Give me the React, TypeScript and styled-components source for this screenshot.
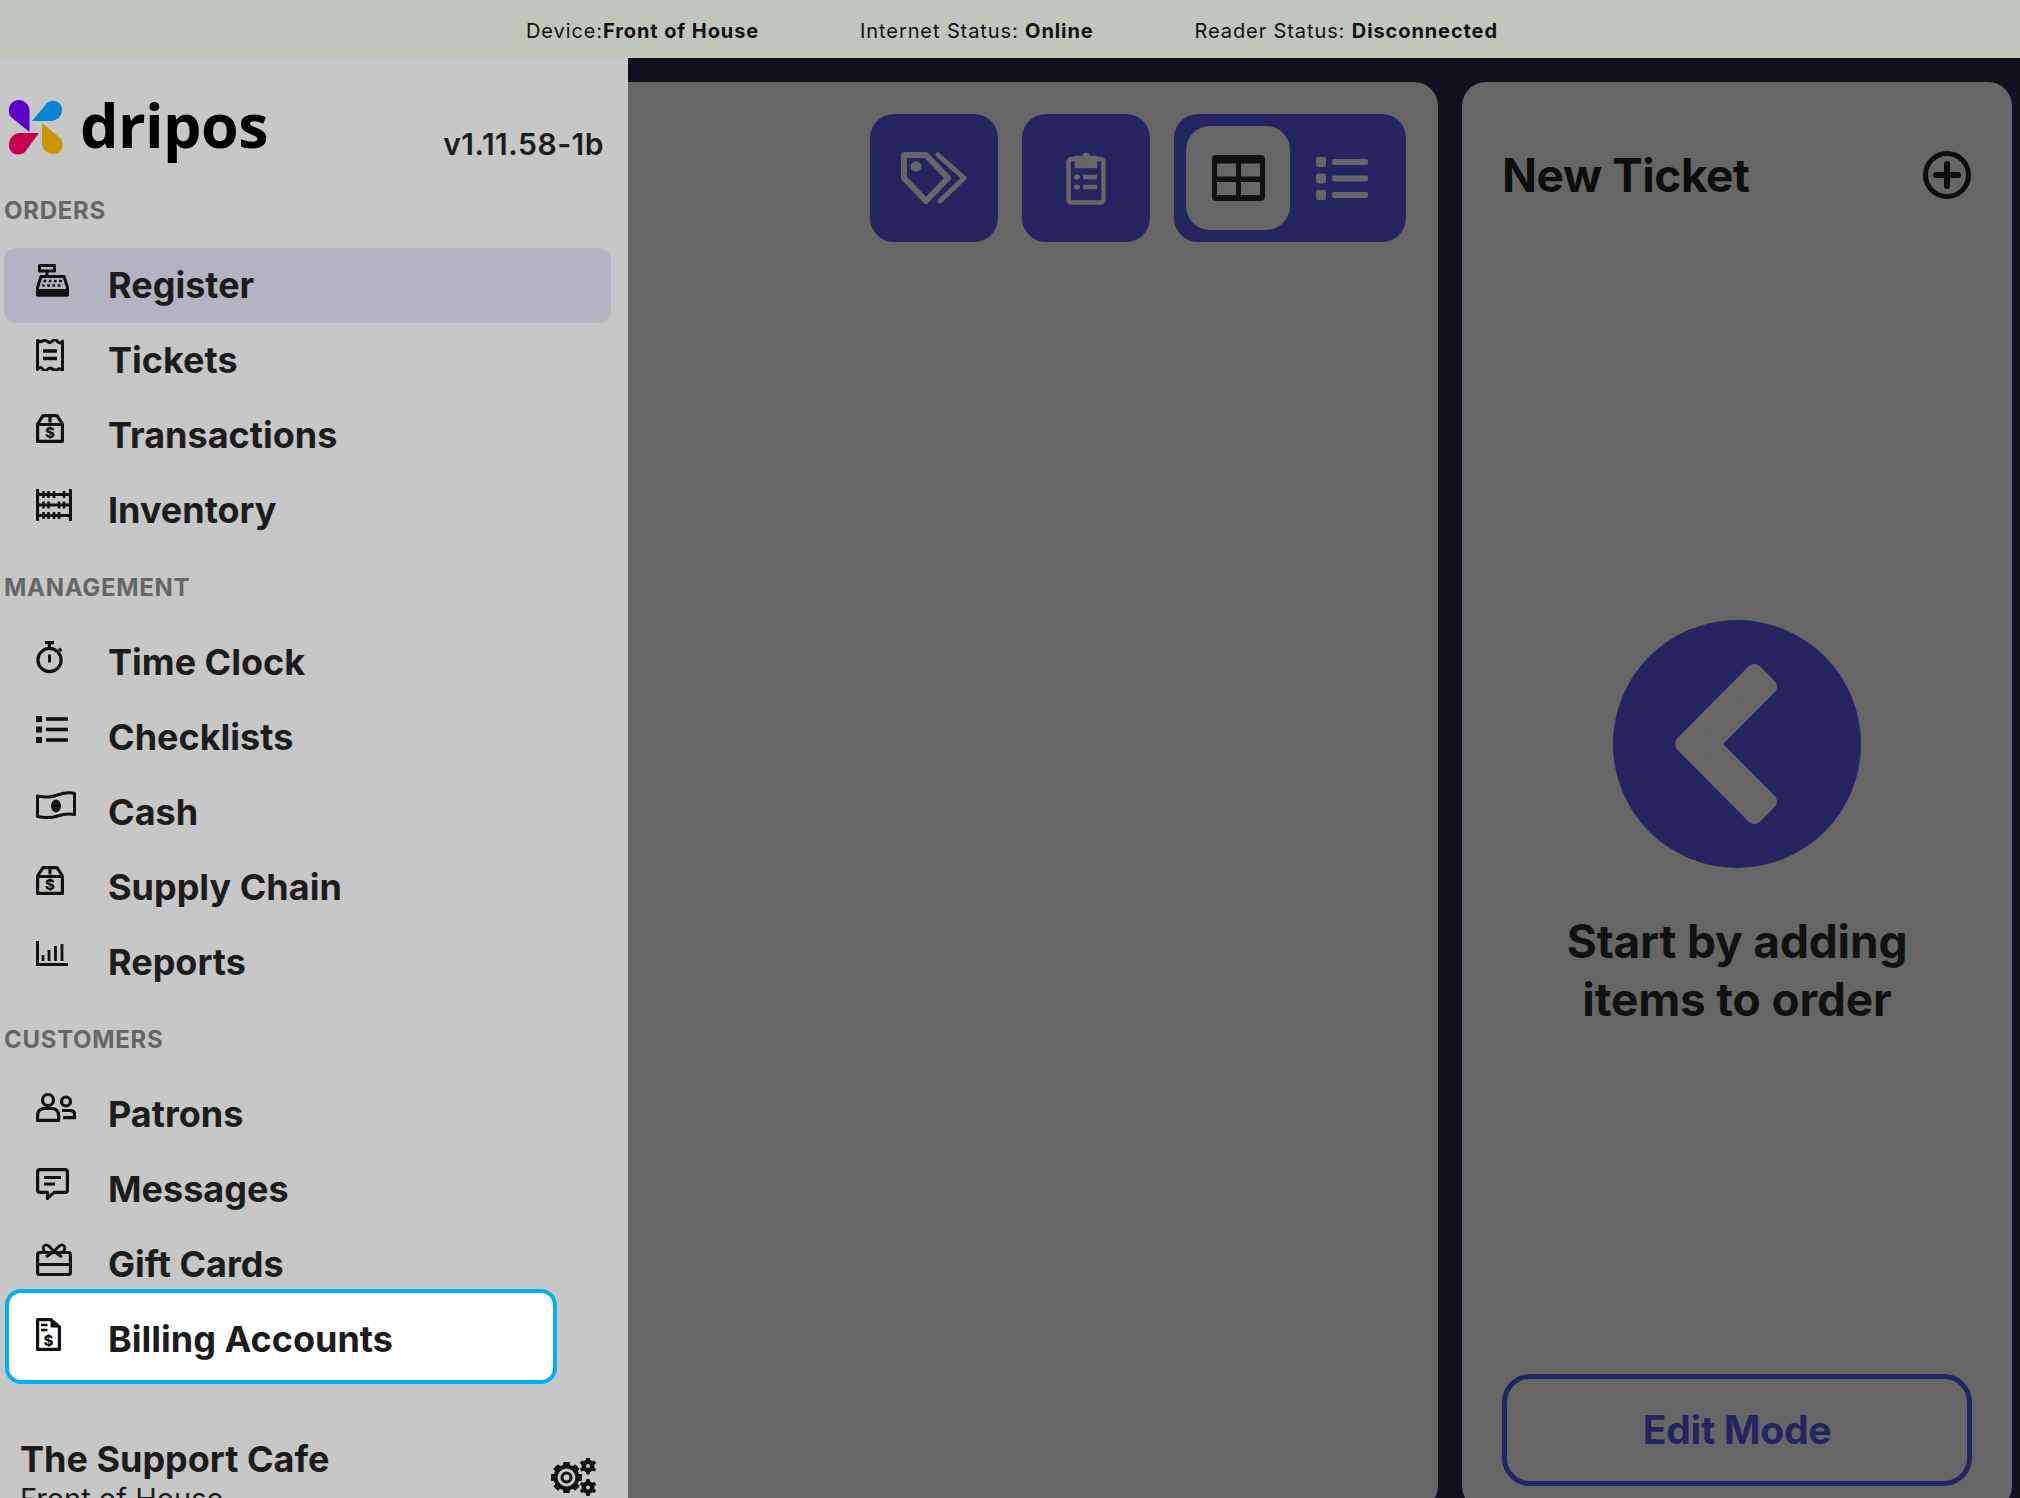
import React from 'react';
import styled, { createGlobalStyle } from 'styled-components';

const GlobalStyle = createGlobalStyle`
  html, body {
    margin: 0;
    padding: 0;
    background: #10111d;
    font-family: Inter, "Liberation Sans", sans-serif;
  }
  * { box-sizing: border-box; }
`;

const Page = styled.div`
  width: 2020px;
  height: 1498px;
  overflow: hidden;
  display: flex;
  flex-direction: column;
  background: #10111d;
`;

const StatusBar = styled.div`
  flex: 0 0 58px;
  display: flex;
  align-items: center;
  justify-content: center;
  gap: 101px;
  padding: 4px 0 0 4px;
  background: #bfc8b8;
  color: #101010;
  font-size: 20px;
  letter-spacing: 0.9px;
`;

const Body = styled.div`
  flex: 0 0 auto;
  display: flex;
  height: 1440px;
`;

const Sidebar = styled.aside`
  flex: 0 0 628px;
  background: #c7c7c7;
  display: flex;
  flex-direction: column;
  padding-left: 4px;
`;

const Brand = styled.div`
  flex: none;
  height: 113px;
  display: flex;
  align-items: flex-start;
  justify-content: space-between;
  padding: 40px 24px 0 4px;
`;

const LogoGroup = styled.div`
  display: flex;
  align-items: center;
  gap: 16px;
  height: 60px;
`;

const LogoText = styled.span`
  font-family: "Open Sans", sans-serif;
  font-weight: 700;
  font-size: 61px;
  line-height: 60px;
  color: #000;
  position: relative;
  top: -3px;
  letter-spacing: -0.6px;
`;

const Version = styled.span`
  font-size: 30px;
  line-height: 36px;
  font-weight: 600;
  color: #1c1c1c;
  margin-top: 28px;
  letter-spacing: 0.5px;
`;

const SectionTitle = styled.div`
  flex: none;
  height: 77px;
  padding-top: 2px;
  display: flex;
  align-items: center;
  font-size: 24px;
  font-weight: 700;
  color: #666;
  letter-spacing: 0.7px;
`;

const NavRow = styled.div<{ $active?: boolean; $callout?: boolean }>`
  flex: none;
  height: 75px;
  width: 607px;
  display: flex;
  align-items: center;
  padding: 0 0 2px 32px;
  border-radius: 12px;
  color: #1c1c1c;
  font-size: 36px;
  font-weight: 700;
  background: ${(p) => (p.$active ? '#b3b3c2' : 'transparent')};
  ${(p) =>
    p.$callout &&
    `
    width: 552px;
    height: 95px;
    margin: -13px 0 0 1px;
    padding: 5px 0 0 27px;
    background: #fff;
    border: 4px solid #00b0f0;
    border-radius: 16px;
    position: relative;
  `}
`;

const IconSlot = styled.span`
  flex: 0 0 72px;
  height: 32px;
  margin-bottom: 10px;
  display: flex;
  align-items: flex-start;
  svg { display: block; }
`;

const SidebarFooter = styled.div`
  flex: none;
  display: flex;
  justify-content: space-between;
  align-items: flex-start;
  padding: 53px 31px 0 16px;
`;

const CafeName = styled.div`
  font-size: 36px;
  font-weight: 700;
  line-height: 44px;
  color: #1c1c1c;
`;

const CafeDevice = styled.div`
  font-size: 29px;
  line-height: 36px;
  color: #1c1c1c;
`;

const GearWrap = styled.div`
  margin-top: 21px;
`;

const Main = styled.main`
  flex: 1;
  display: flex;
  gap: 24px;
  padding: 24px 8px 0 0;
`;

const Panel = styled.section`
  height: 1428px;
  background: #666;
  border-radius: 24px;
`;

const MenuPanel = styled(Panel)`
  flex: 0 0 810px;
  display: flex;
  flex-direction: column;
  border-radius: 0 24px 24px 0;
`;

const Toolbar = styled.div`
  display: flex;
  justify-content: flex-end;
  gap: 24px;
  padding: 32px 32px 0 0;
`;

const SearchGhost = styled.div`
  width: 196px;
  height: 128px;
  margin-right: 22px;
  background: #686868;
`;

const ToolButton = styled.button`
  width: 128px;
  height: 128px;
  border: 0;
  padding: 0;
  border-radius: 24px;
  background: #232560;
  display: flex;
  align-items: center;
  justify-content: center;
`;

const ViewToggle = styled.div`
  width: 232px;
  height: 128px;
  border-radius: 24px;
  background: #232560;
  display: flex;
  align-items: center;
  padding-left: 12px;
`;

const ViewOption = styled.div<{ $selected?: boolean }>`
  width: 104px;
  height: 104px;
  border-radius: 24px;
  background: ${(p) => (p.$selected ? '#666' : 'transparent')};
  display: flex;
  align-items: center;
  justify-content: center;
`;

const TicketPanel = styled(Panel)`
  flex: 0 0 550px;
  display: flex;
  flex-direction: column;
  padding: 0 40px;
`;

const TicketHeader = styled.div`
  height: 186px;
  display: flex;
  align-items: center;
  justify-content: space-between;
  padding-right: 1px;
  color: #0d0d0d;
`;

const TicketTitle = styled.h2`
  margin: 0;
  font-size: 46px;
  font-weight: 700;
  letter-spacing: -0.45px;
`;

const EmptyState = styled.div`
  display: flex;
  flex-direction: column;
  align-items: center;
  margin-top: 352px;
`;

const BackCircle = styled.div`
  width: 248px;
  height: 248px;
  border-radius: 50%;
  background: #232560;
  display: flex;
  align-items: center;
  justify-content: center;
`;

const EmptyText = styled.div`
  margin-top: 44px;
  font-size: 46px;
  line-height: 58px;
  font-weight: 700;
  letter-spacing: -0.15px;
  text-align: center;
  color: #111;
`;

const EditButton = styled.button`
  margin-top: 346px;
  width: 470px;
  height: 112px;
  padding: 0 0 2px;
  background: transparent;
  border: 5px solid #232560;
  border-radius: 28px;
  color: #232560;
  font-family: inherit;
  font-size: 39px;
  font-weight: 700;
  letter-spacing: -0.2px;
`;

const SmallDollar = styled.text`
  font-family: Inter, sans-serif;
  font-weight: 800;
  font-size: 15px;
  fill: #111;
  stroke: none;
  text-anchor: middle;
`;

const RegisterIcon = () => (
  <svg width="33" height="33" viewBox="0 0 33 33" fill="none" stroke="#111" strokeWidth="3" strokeLinejoin="round">
    <rect x="3.5" y="1.5" width="15" height="5.5" />
    <path d="M11 7v5" />
    <path d="M5 12.5h23l3.500 11v7.500h-30v-7.500z" />
    <path d="M2 26.500h29V31H2z" fill="#111" />
    <g strokeWidth="2.600" strokeDasharray="2.800 2.400">
      <path d="M7.500 17h19" />
      <path d="M6 21.500h21" />
    </g>
  </svg>
);

const TicketsIcon = () => (
  <svg width="28" height="32" viewBox="0 0 28 32" fill="none" stroke="#111" strokeWidth="3">
    <path d="M1.500 1.500q2.500 2 5 .5t5 .5 5-.5 5 .5 5-.5v29q-2.500-2-5-.5t-5-.5-5 .5-5-.5-5 .5z" strokeLinejoin="round" />
    <path d="M7 12h14M7 19.500h14" strokeWidth="3.600" />
  </svg>
);

const BoxDollarIcon = () => (
  <svg width="28" height="29" viewBox="0 0 28 29" fill="none" stroke="#111" strokeWidth="3.200">
    <path d="M1.600 10L7 1.600h14L26.400 10v17.400H1.600z" strokeLinejoin="round" />
    <path d="M1.500 10.500h25M14 1.500v7" />
    <SmallDollar x="14" y="24">$</SmallDollar>
  </svg>
);

const InventoryIcon = () => (
  <svg width="36" height="32" viewBox="0 0 36 32" fill="none" stroke="#111" strokeWidth="2.800">
    <path d="M1.500 0v32M34.500 0v32" strokeWidth="3.200" />
    <path d="M1 5.500h34M1 16h34M1 26.500h34" />
    <g strokeWidth="2.600">
      <path d="M7.500 2v7M12.500 2v7M18 2v7M28 2v7" />
      <path d="M7.500 12.500v7M12.500 12.500v7M23 12.500v7M28 12.500v7" />
      <path d="M7.500 23v7M12.500 23v7M18 23v7M23 23v7" />
    </g>
  </svg>
);

const StopwatchIcon = () => (
  <svg width="28" height="33" viewBox="0 0 28 33" fill="none" stroke="#111" strokeWidth="3.200">
    <circle cx="13.500" cy="19" r="11.600" />
    <path d="M9 1.600h9M13.500 2v5" />
    <path d="M13.500 13.500v8" strokeWidth="3" />
    <path d="M23 7.500l2.500 2.500" strokeWidth="2.600" />
  </svg>
);

const ChecklistIcon = () => (
  <svg width="32" height="27" viewBox="0 0 32 27" fill="#111">
    <rect x="0" y="0" width="6" height="6" />
    <rect x="0" y="10.500" width="6" height="6" />
    <rect x="0" y="21" width="6" height="6" />
    <rect x="10" y="1.200" width="22" height="3.600" />
    <rect x="10" y="11.700" width="22" height="3.600" />
    <rect x="10" y="22.200" width="22" height="3.600" />
  </svg>
);

const CashIcon = () => (
  <svg width="40" height="29" viewBox="0 0 40 29" fill="none" stroke="#111" strokeWidth="3">
    <path d="M1.500 5c10 2 14 1 20-1s11-3 17-1.500v21c-7-1.500-11-.5-17 1.500s-11 2.500-20 .5z" strokeLinejoin="round" />
    <ellipse cx="20" cy="15" rx="5" ry="6.500" fill="#111" stroke="none" />
  </svg>
);

const ReportsIcon = () => (
  <svg width="32" height="25" viewBox="0 0 32 25" fill="none" stroke="#111" strokeWidth="2.800">
    <path d="M1.500 0v23.400H32" strokeWidth="3" />
    <path d="M7 14v6M13 9v11M19.500 5v15M26 3v17" />
  </svg>
);

const PatronsIcon = () => (
  <svg width="40" height="29" viewBox="0 0 40 29" fill="none" stroke="#111" strokeWidth="3.200">
    <circle cx="12" cy="7" r="5.500" />
    <path d="M1.600 27.400v-5c0-5 4-7 7-7h7c3 0 7 2 7 7v5z" strokeLinejoin="round" />
    <circle cx="30" cy="8.500" r="4.500" />
    <path d="M26 17.500h8c3 0 4.500 1.500 4.500 3.500v3.600H27" />
  </svg>
);

const MessagesIcon = () => (
  <svg width="33" height="33" viewBox="0 0 33 33" fill="none" stroke="#111" strokeWidth="3.200">
    <path d="M4 1.600h25q2.400 0 2.400 2.400v18q0 2.400-2.400 2.400H18l-6.500 6v-6H4q-2.400 0-2.400-2.400V4q0-2.400 2.400-2.400z" strokeLinejoin="round" />
    <path d="M8 9.500h17M8 16h11" />
  </svg>
);

const GiftIcon = () => (
  <svg width="36" height="33" viewBox="0 0 36 33" fill="none" stroke="#111" strokeWidth="3.200">
    <rect x="1.600" y="9.500" width="32.800" height="22" rx="2" />
    <path d="M1.500 21.500h33" />
    <path d="M10 14l8-5.500L26 14" strokeWidth="2.800" />
    <path d="M18 8.500C14 4 12 1.500 9.500 2S6 6 9 8.500M18 8.500C22 4 24 1.500 26.500 2S30 6 27 8.500" strokeWidth="2.800" />
  </svg>
);

const BillingIcon = () => (
  <svg width="25" height="33" viewBox="0 0 25 33" fill="none" stroke="#111" strokeWidth="3.200">
    <path d="M1.600 1.600H15L23.400 9v22.400H1.600z" strokeLinejoin="round" />
    <path d="M15 2v7h8z" fill="#111" strokeWidth="1" />
    <path d="M5 7h6.500M5 12h6.500" strokeWidth="2.600" />
    <SmallDollar x="12.500" y="28">$</SmallDollar>
  </svg>
);

const Cog = ({ cx, cy, r, outer, teeth, width }: { cx: number; cy: number; r: number; outer: number; teeth: number; width: number }) => (
  <g>
    <circle cx={cx} cy={cy} r={r} fill="none" stroke="#111" strokeWidth={width} />
    {Array.from({ length: teeth }).map((_, i) => (
      <rect
        key={i}
        x={cx - outer * 0.22}
        y={cy - outer}
        width={outer * 0.44}
        height={outer - r}
        rx="1"
        fill="#111"
        transform={`rotate(${(360 / teeth) * i} ${cx} ${cy})`}
      />
    ))}
  </g>
);

const GearsIcon = () => (
  <svg width="46" height="38" viewBox="0 0 46 38">
    <Cog cx={15.5} cy={19.5} r={11} outer={15.5} teeth={8} width={4} />
    <circle cx="15.500" cy="19.500" r="4.500" fill="none" stroke="#111" strokeWidth="3" />
    <Cog cx={37} cy={8} r={4.25} outer={8.5} teeth={6} width={4.5} />
    <Cog cx={37} cy={29.5} r={4.25} outer={8.5} teeth={6} width={4.5} />
  </svg>
);

const Logo = () => (
  <svg width="56" height="56" viewBox="0 0 56 56">
    <path d="M21.500 32L3 17C-1 13 0 1 10 0c8 0 11.500 6 11.500 11z" fill="#5a00c8" />
    <path d="M24 21L39 3c4-4 15-3 15 7 0 7-6 11-11 11z" fill="#0685d2" />
    <path d="M31 33L17 52c-4 4-16 4-16-7 0-8 6-12 11-12z" fill="#c4004f" />
    <path d="M34 23l18 15c4 4 4 16-7 16-7 0-11-6-11-11z" fill="#cc9500" />
  </svg>
);

const TagsIcon = () => (
  <svg width="66" height="52" viewBox="0 0 66 52" fill="none" stroke="#666" strokeWidth="6" strokeLinejoin="round" strokeLinecap="round">
    <path d="M3 3h22l22 23-22 23L3 26z" />
    <ellipse cx="15" cy="14.500" rx="5.500" ry="5" fill="#666" stroke="none" />
    <path d="M37 3l26 23-24 23" strokeWidth="5" />
  </svg>
);

const ClipboardIcon = () => (
  <svg width="40" height="54" viewBox="0 0 40 54" fill="none" stroke="#666" strokeWidth="4.500">
    <rect x="2.500" y="8" width="35" height="43.500" rx="3" />
    <path d="M11 7h18v8H11z" fill="#666" />
    <circle cx="20" cy="5" r="3.500" fill="#666" stroke="none" />
    <ellipse cx="11" cy="26" rx="3" ry="2.500" fill="#666" stroke="none" />
    <ellipse cx="11" cy="36" rx="3" ry="2.500" fill="#666" stroke="none" />
    <path d="M17 26h14M17 36h14" strokeWidth="4.500" />
  </svg>
);

const GridIcon = () => (
  <svg width="53" height="46" viewBox="0 0 53 46" fill="#111">
    <rect width="53" height="46" rx="4" />
    <rect x="5" y="8.500" width="19" height="13" fill="#666" />
    <rect x="29" y="8.500" width="19" height="13" fill="#666" />
    <rect x="5" y="27" width="19" height="13" fill="#666" />
    <rect x="29" y="27" width="19" height="13" fill="#666" />
  </svg>
);

const ListIcon = () => (
  <svg width="52" height="43" viewBox="0 0 52 43" fill="#666">
    <rect x="0" y="0" width="10" height="10" rx="2" />
    <rect x="0" y="16.500" width="10" height="10" rx="2" />
    <rect x="0" y="33" width="10" height="10" rx="2" />
    <rect x="16" y="2" width="36" height="6" rx="2" />
    <rect x="16" y="18.500" width="36" height="6" rx="2" />
    <rect x="16" y="35" width="36" height="6" rx="2" />
  </svg>
);

const PlusCircleIcon = () => (
  <svg width="48" height="48" viewBox="0 0 48 48" fill="none" stroke="#0d0d0d">
    <circle cx="24" cy="24" r="21.500" strokeWidth="5" />
    <path d="M24 13v22M13 24h22" strokeWidth="6" strokeLinecap="round" />
  </svg>
);

const ChevronBack = () => (
  <svg width="140" height="190" viewBox="5 0 140 190">
    <path
      d="M92.350 22.950L107.050 37.650 49.700 95l57.350 57.350-14.700 14.700L21 95z"
      fill="#666"
      stroke="#666"
      strokeWidth="16"
      strokeLinejoin="round"
    />
  </svg>
);

type NavItem = { label: string; icon: React.ReactNode; active?: boolean; callout?: boolean };
type NavSection = { title: string; items: NavItem[] };

const sections: NavSection[] = [
  {
    title: 'ORDERS',
    items: [
      { label: 'Register', icon: <RegisterIcon />, active: true },
      { label: 'Tickets', icon: <TicketsIcon /> },
      { label: 'Transactions', icon: <BoxDollarIcon /> },
      { label: 'Inventory', icon: <InventoryIcon /> },
    ],
  },
  {
    title: 'MANAGEMENT',
    items: [
      { label: 'Time Clock', icon: <StopwatchIcon /> },
      { label: 'Checklists', icon: <ChecklistIcon /> },
      { label: 'Cash', icon: <CashIcon /> },
      { label: 'Supply Chain', icon: <BoxDollarIcon /> },
      { label: 'Reports', icon: <ReportsIcon /> },
    ],
  },
  {
    title: 'CUSTOMERS',
    items: [
      { label: 'Patrons', icon: <PatronsIcon /> },
      { label: 'Messages', icon: <MessagesIcon /> },
      { label: 'Gift Cards', icon: <GiftIcon /> },
      { label: 'Billing Accounts', icon: <BillingIcon />, callout: true },
    ],
  },
];

export default function App() {
  return (
    <Page>
      <GlobalStyle />
      <StatusBar>
        <span>
          Device:<b>Front of House</b>
        </span>
        <span>
          Internet Status: <b>Online</b>
        </span>
        <span>
          Reader Status: <b>Disconnected</b>
        </span>
      </StatusBar>
      <Body>
        <Sidebar>
          <Brand>
            <LogoGroup>
              <Logo />
              <LogoText>dripos</LogoText>
            </LogoGroup>
            <Version>v1.11.58-1b</Version>
          </Brand>
          {sections.map((section) => (
            <React.Fragment key={section.title}>
              <SectionTitle>{section.title}</SectionTitle>
              {section.items.map((item) => (
                <NavRow key={item.label} $active={item.active} $callout={item.callout}>
                  <IconSlot>{item.icon}</IconSlot>
                  {item.label}
                </NavRow>
              ))}
            </React.Fragment>
          ))}
          <SidebarFooter>
            <div>
              <CafeName>The Support Cafe</CafeName>
              <CafeDevice>Front of House</CafeDevice>
            </div>
            <GearWrap>
              <GearsIcon />
            </GearWrap>
          </SidebarFooter>
        </Sidebar>
        <Main>
          <MenuPanel>
            <Toolbar>
              <SearchGhost />
              <ToolButton>
                <TagsIcon />
              </ToolButton>
              <ToolButton>
                <ClipboardIcon />
              </ToolButton>
              <ViewToggle>
                <ViewOption $selected>
                  <GridIcon />
                </ViewOption>
                <ViewOption>
                  <ListIcon />
                </ViewOption>
              </ViewToggle>
            </Toolbar>
          </MenuPanel>
          <TicketPanel>
            <TicketHeader>
              <TicketTitle>New Ticket</TicketTitle>
              <PlusCircleIcon />
            </TicketHeader>
            <EmptyState>
              <BackCircle>
                <ChevronBack />
              </BackCircle>
              <EmptyText>
                Start by adding
                <br />
                items to order
              </EmptyText>
              <EditButton>Edit Mode</EditButton>
            </EmptyState>
          </TicketPanel>
        </Main>
      </Body>
    </Page>
  );
}
